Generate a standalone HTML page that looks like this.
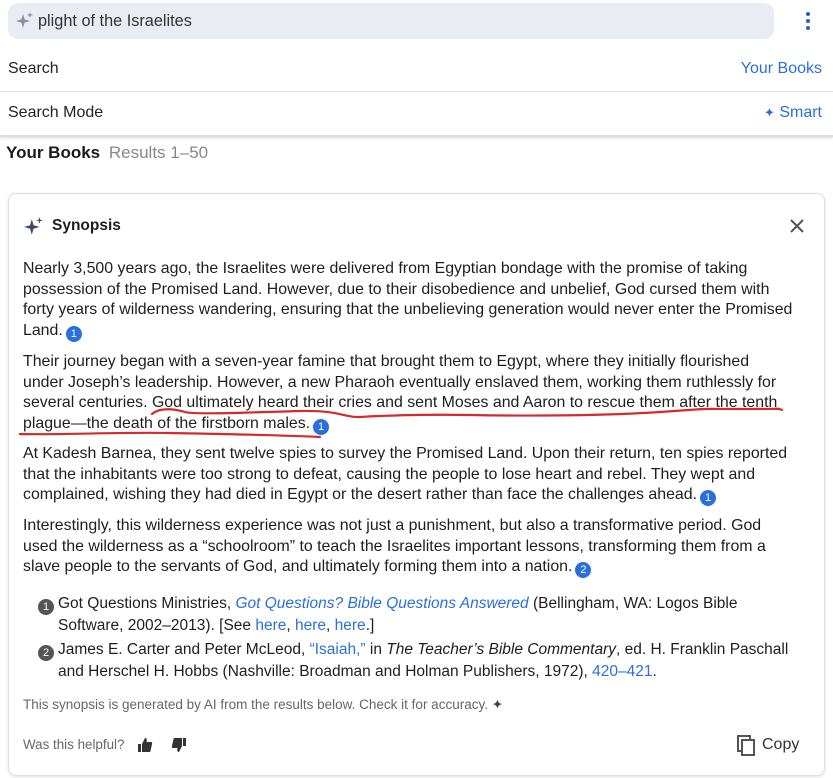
<!DOCTYPE html>
<html><head><meta charset="utf-8"><style>
*{margin:0;padding:0;box-sizing:border-box}
body{width:833px;height:778px;background:#fff;font-family:"Liberation Sans",sans-serif;color:#1e1e1e;position:relative;overflow:hidden}
.abs{position:absolute;white-space:nowrap}
.bar{left:8px;top:3px;width:766px;height:36px;background:#e9ecf3;border-radius:10px}
.row{font-size:16px;color:#222}
.line{position:absolute;left:0;width:833px;height:1px;background:#e3e3e3}
.card{left:8px;top:193px;width:817px;height:583px;border:1px solid #ddd;border-radius:8px;box-shadow:0 1px 3px rgba(0,0,0,.12)}
.p{left:23px;font-size:15.9px;line-height:20.7px;color:#1e1e1e}
.b{display:inline-block;width:16px;height:16px;border-radius:50%;background:#2a6fdb;color:#fff;font-size:11px;line-height:16px;text-align:center;vertical-align:-2px;margin-left:3px}
.g{display:inline-block;width:16px;height:16px;border-radius:50%;background:#555;color:#fff;font-size:11px;line-height:16px;text-align:center;vertical-align:-2px;margin-right:4px}
a{color:#2a6fdb;text-decoration:none}
.ref{left:38px;font-size:15.5px;line-height:21px}
.small{color:#666}
</style></head><body>
<div class="abs bar"></div>
<svg class="abs" style="left:15px;top:11px" width="20" height="20" viewBox="0 0 20 20"><path d="M8 3 L9.6 8.4 L15 10 L9.6 11.6 L8 17 L6.4 11.6 L1 10 L6.4 8.4Z" fill="#8a8f9c"/><path d="M15 1 L15.7 3.3 L18 4 L15.7 4.7 L15 7 L14.3 4.7 L12 4 L14.3 3.3Z" fill="#8a8f9c"/></svg>
<div class="abs" style="left:38px;top:12px;font-size:16.3px;color:#333">plight of the Israelites</div>
<svg class="abs" style="left:805px;top:11px" width="6" height="20"><circle cx="3" cy="3" r="2" fill="#2a5fb0"/><circle cx="3" cy="10" r="2" fill="#2a5fb0"/><circle cx="3" cy="17" r="2" fill="#2a5fb0"/></svg>
<div class="abs row" style="left:8px;top:60px">Search</div>
<div class="abs" style="right:11px;top:60px;font-size:16px;color:#2a6fdb">Your Books</div>
<div class="line" style="top:91px"></div>
<div class="abs row" style="left:8px;top:104px">Search Mode</div>
<div class="abs" style="right:11px;top:104px;font-size:16px;color:#2a6fdb"><span style="font-size:13px">✦</span> Smart</div>
<div class="line" style="top:135px;height:2px;background:#ddd;box-shadow:0 1px 2px rgba(0,0,0,.15)"></div>
<div class="abs" style="left:6px;top:143px;font-size:17px"><b style="color:#1a1a1a">Your Books</b> <span style="color:#888;margin-left:4px">Results 1–50</span></div>
<div class="abs card"></div>
<svg class="abs" style="left:23px;top:216px" width="22" height="22" viewBox="0 0 20 20"><path d="M8 3 L9.6 8.4 L15 10 L9.6 11.6 L8 17 L6.4 11.6 L1 10 L6.4 8.4Z" fill="#3b4a66"/><path d="M15 1 L15.7 3.3 L18 4 L15.7 4.7 L15 7 L14.3 4.7 L12 4 L14.3 3.3Z" fill="#3b4a66"/></svg>
<div class="abs" style="left:52px;top:217px;font-size:15.5px;font-weight:bold">Synopsis</div>
<svg class="abs" style="left:790px;top:219px" width="14" height="14"><path d="M1 1L13 13M13 1L1 13" stroke="#555" stroke-width="2"/></svg>
<div class="abs p" style="top:259px">Nearly 3,500 years ago, the Israelites were delivered from Egyptian bondage with the promise of taking<br>possession of the Promised Land. However, due to their disobedience and unbelief, God cursed them with<br>forty years of wilderness wandering, ensuring that the unbelieving generation would never enter the Promised<br>Land.<span class="b">1</span></div>
<div class="abs p" style="top:352px">Their journey began with a seven-year famine that brought them to Egypt, where they initially flourished<br>under Joseph’s leadership. However, a new Pharaoh eventually enslaved them, working them ruthlessly for<br>several centuries. God ultimately heard their cries and sent Moses and Aaron to rescue them after the tenth<br>plague—the death of the firstborn males.<span class="b">1</span></div>
<div class="abs p" style="top:444px">At Kadesh Barnea, they sent twelve spies to survey the Promised Land. Upon their return, ten spies reported<br>that the inhabitants were too strong to defeat, causing the people to lose heart and rebel. They wept and<br>complained, wishing they had died in Egypt or the desert rather than face the challenges ahead.<span class="b">1</span></div>
<div class="abs p" style="top:516px">Interestingly, this wilderness experience was not just a punishment, but also a transformative period. God<br>used the wilderness as a “schoolroom” to teach the Israelites important lessons, transforming them from a<br>slave people to the servants of God, and ultimately forming them into a nation.<span class="b">2</span></div>
<div class="abs ref" style="top:593px"><span class="g">1</span>Got Questions Ministries, <a><i>Got Questions? Bible Questions Answered</i></a> (Bellingham, WA: Logos Bible<br><span style="margin-left:20px">Software, 2002–2013). [See <a>here</a>, <a>here</a>, <a>here</a>.]</span></div>
<div class="abs ref" style="top:639px"><span class="g">2</span>James E. Carter and Peter McLeod, <a>“Isaiah,”</a> in <i>The Teacher’s Bible Commentary</i>, ed. H. Franklin Paschall<br><span style="margin-left:20px">and Herschel H. Hobbs (Nashville: Broadman and Holman Publishers, 1972), <a>420–421</a>.</span></div>
<div class="abs small" style="left:23px;top:697px;font-size:13.5px">This synopsis is generated by AI from the results below. Check it for accuracy. <span style="color:#444">✦</span></div>
<div class="abs small" style="left:23px;top:737px;font-size:13.4px">Was this helpful?</div>
<svg class="abs" style="left:137px;top:737px" width="16" height="16" viewBox="0 0 16 16"><rect x="1" y="7" width="3" height="8" fill="#333"/><path d="M5 7 L8 1 C10 1,10 3,9.5 5 L14 5 C15 5,15.5 6,15 7 L13.5 14 C13.3 14.7,12.8 15,12 15 L5 15Z" fill="#333"/></svg>
<svg class="abs" style="left:171px;top:737px" width="16" height="16" viewBox="0 0 16 16"><g transform="rotate(180 8 8)"><rect x="1" y="7" width="3" height="8" fill="#333"/><path d="M5 7 L8 1 C10 1,10 3,9.5 5 L14 5 C15 5,15.5 6,15 7 L13.5 14 C13.3 14.7,12.8 15,12 15 L5 15Z" fill="#333"/></g></svg>
<svg class="abs" style="left:737px;top:735px" width="20" height="22"><rect x="1" y="1" width="12" height="15" fill="none" stroke="#555" stroke-width="2"/><rect x="5" y="5" width="12" height="15" fill="#fff" stroke="#555" stroke-width="2"/></svg>
<div class="abs" style="left:762px;top:736px;font-size:16px;color:#333">Copy</div>
<svg class="abs" style="left:0;top:0" width="833" height="778"><path d="M152 414 C160 407,175 409,185 412 S260 412,300 411 S345 418,360 417 S420 414,470 415 S600 416,660 412 S690 409,740 409 S775 408,782 410" fill="none" stroke="#d32a2a" stroke-width="2.2" stroke-linecap="round"/><path d="M20 434 C60 435,120 432,170 433 S280 435,320 437" fill="none" stroke="#d32a2a" stroke-width="2.2" stroke-linecap="round"/></svg>
</body></html>
